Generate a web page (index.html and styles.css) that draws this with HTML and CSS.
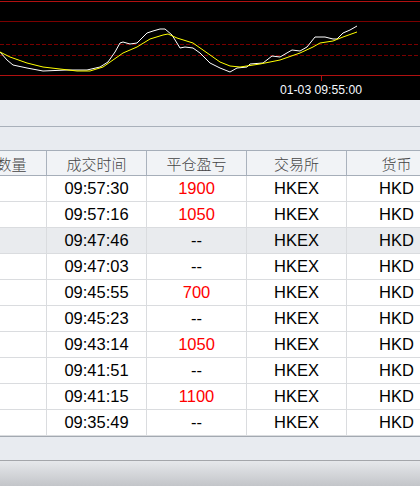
FILE: index.html
```html
<!DOCTYPE html>
<html lang="zh">
<head>
<meta charset="utf-8">
<link rel="stylesheet" href="styles.css">
</head>
<body>
<div class="page">
  <div class="chart">
    <svg width="420" height="100" viewBox="0 0 420 100" xmlns="http://www.w3.org/2000/svg">
      <rect x="0" y="0" width="420" height="100" fill="#000"/>
      <line x1="0" y1="1.5" x2="420" y2="1.5" stroke="#b01010" stroke-width="1"/>
      <line x1="0" y1="21.5" x2="420" y2="21.5" stroke="#7a0000" stroke-width="1"/>
      <line x1="0" y1="44.5" x2="420" y2="44.5" stroke="#7a0000" stroke-width="1" stroke-dasharray="4 2"/>
      <line x1="0" y1="55.5" x2="420" y2="55.5" stroke="#7a0000" stroke-width="1" stroke-dasharray="4 2"/>
      <line x1="0" y1="75.5" x2="420" y2="75.5" stroke="#b01010" stroke-width="1"/>
      <line x1="321.5" y1="75" x2="321.5" y2="81" stroke="#b01010" stroke-width="1"/>
      <polyline fill="none" stroke="#ffffff" stroke-width="1" points="0,52 7,60 13,65 27,68 43,71 67,70 87,70 100,67 108,62 115,52 120,43 123,42 130,44 137,43 147,33 153,31 160,29 165,29 172,35 180,48 185,47 193,48 200,53 210,63 220,68 230,72 237,68 247,67 250,64 263,63 272,56 280,57 292,50 300,51 307,47 315,37 325,37 333,39 337,39 343,33 350,30 357,26"/>
      <polyline fill="none" stroke="#ffff00" stroke-width="1" points="0,52 10,57 27,63 43,67 60,69 77,71 90,71 103,67 113,60 123,53 137,47 150,39 163,35 168,34 177,38 193,43 203,50 220,62 230,66 240,67 260,64 280,60 300,53 313,47 320,43 333,41 343,37 357,32"/>
      <text x="280" y="93.5" class="axis-label">01-03 09:55:00</text>
    </svg>
  </div>
  <div class="toolbar"></div>
  <div class="tabs"></div>
  <div class="table-clip">
    <div class="grid">
      <div class="row head">
        <div class="cell">成交数量</div>
        <div class="cell">成交时间</div>
        <div class="cell">平仓盈亏</div>
        <div class="cell">交易所</div>
        <div class="cell">货币</div>
      </div>
      <div class="row">
        <div class="cell"></div><div class="cell">09:57:30</div><div class="cell red">1900</div><div class="cell">HKEX</div><div class="cell">HKD</div>
      </div>
      <div class="row">
        <div class="cell"></div><div class="cell">09:57:16</div><div class="cell red">1050</div><div class="cell">HKEX</div><div class="cell">HKD</div>
      </div>
      <div class="row selected">
        <div class="cell"></div><div class="cell">09:47:46</div><div class="cell">--</div><div class="cell">HKEX</div><div class="cell">HKD</div>
      </div>
      <div class="row">
        <div class="cell"></div><div class="cell">09:47:03</div><div class="cell">--</div><div class="cell">HKEX</div><div class="cell">HKD</div>
      </div>
      <div class="row">
        <div class="cell"></div><div class="cell">09:45:55</div><div class="cell red">700</div><div class="cell">HKEX</div><div class="cell">HKD</div>
      </div>
      <div class="row">
        <div class="cell"></div><div class="cell">09:45:23</div><div class="cell">--</div><div class="cell">HKEX</div><div class="cell">HKD</div>
      </div>
      <div class="row">
        <div class="cell"></div><div class="cell">09:43:14</div><div class="cell red">1050</div><div class="cell">HKEX</div><div class="cell">HKD</div>
      </div>
      <div class="row">
        <div class="cell"></div><div class="cell">09:41:51</div><div class="cell">--</div><div class="cell">HKEX</div><div class="cell">HKD</div>
      </div>
      <div class="row">
        <div class="cell"></div><div class="cell">09:41:15</div><div class="cell red">1100</div><div class="cell">HKEX</div><div class="cell">HKD</div>
      </div>
      <div class="row">
        <div class="cell"></div><div class="cell">09:35:49</div><div class="cell">--</div><div class="cell">HKEX</div><div class="cell">HKD</div>
      </div>
    </div>
  </div>
  <div class="spacer"></div>
  <div class="statusbar"></div>
</div>
</body>
</html>
```

FILE: styles.css
```css
html, body {
  margin: 0;
  padding: 0;
  background: #e8ebf0;
}
.page {
  width: 420px;
  height: 486px;
  overflow: hidden;
  display: flex;
  flex-direction: column;
  background: #e8ebf0;
}
.chart {
  height: 100px;
  flex: none;
  background: #000;
}
.chart svg {
  display: block;
}
.axis-label {
  font-family: "Liberation Sans", Arial, sans-serif;
  font-size: 12.2px;
  fill: #f4f8ff;
}
.toolbar {
  height: 26px;
  flex: none;
  background: #e8ebf0;
  border-bottom: 1px solid #a9b0ba;
}
.tabs {
  height: 23px;
  flex: none;
  background: #e8ebf0;
}
.table-clip {
  flex: none;
  overflow: hidden;
  background: #fff;
  border-bottom: 1px solid #a3a9b1;
}
.grid {
  margin-left: -53px;
  display: flex;
  flex-direction: column;
}
.row {
  display: grid;
  grid-template-columns: repeat(5, 100px);
  height: 25px;
  border-bottom: 1px solid #dadcdf;
  background: #fff;
}
.row.selected {
  background: #e9ebee;
}
.row.head {
  height: 24px;
  background: #f1f3f6;
  border-top: 1px solid #a6aeb9;
  border-bottom: 1px solid #a6aeb9;
}
.cell {
  display: flex;
  align-items: center;
  justify-content: center;
  border-right: 1px solid #dadcdf;
  font-family: "Liberation Sans", Arial, "Noto Sans CJK SC", sans-serif;
  font-size: 16.5px;
  color: #000;
  white-space: nowrap;
}
.row.head .cell {
  border-right: 1px solid #aab2bd;
  font-family: "Noto Sans CJK SC", sans-serif;
  font-size: 15px;
  font-weight: 300;
  color: #444;
}
.cell.red {
  color: #ff0000;
}
.spacer {
  height: 23px;
  flex: none;
  background: #e8ebf0;
  border-bottom: 1px solid #a4a6aa;
}
.statusbar {
  flex: 1;
  background: linear-gradient(#e6e8eb, #c3c5c9);
}
```
